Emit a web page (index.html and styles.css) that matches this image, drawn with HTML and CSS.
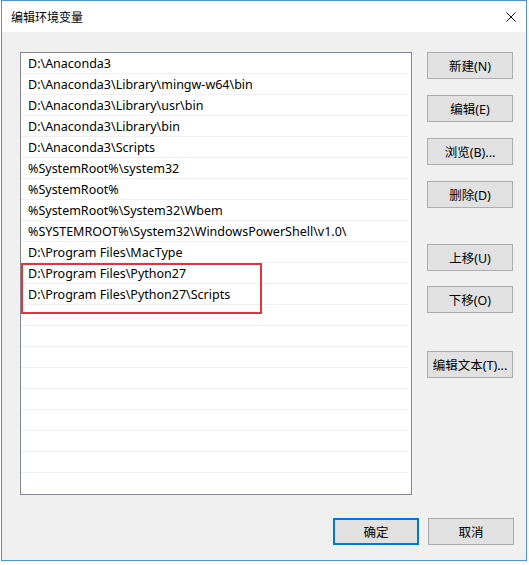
FILE: index.html
```html
<!DOCTYPE html>
<html lang="zh-CN">
<head>
<meta charset="utf-8">
<title>编辑环境变量</title>
<link rel="stylesheet" href="styles.css">
</head>
<body>
<div class="window">
  <div class="titlebar">
    <span class="title">编辑环境变量</span>
    <svg class="close" width="10" height="10" viewBox="0 0 10 10"><path d="M0.5 0.5 L9.5 9.5 M9.5 0.5 L0.5 9.5" stroke="#111" stroke-width="1" fill="none"/></svg>
  </div>
  <div class="content">
    <div class="main">
      <div class="list">
        <div class="row">D:\Anaconda3</div>
        <div class="row">D:\Anaconda3\Library\mingw-w64\bin</div>
        <div class="row">D:\Anaconda3\Library\usr\bin</div>
        <div class="row">D:\Anaconda3\Library\bin</div>
        <div class="row">D:\Anaconda3\Scripts</div>
        <div class="row">%SystemRoot%\system32</div>
        <div class="row">%SystemRoot%</div>
        <div class="row">%SystemRoot%\System32\Wbem</div>
        <div class="row">%SYSTEMROOT%\System32\WindowsPowerShell\v1.0\</div>
        <div class="row">D:\Program Files\MacType</div>
        <div class="row">D:\Program Files\Python27</div>
        <div class="row">D:\Program Files\Python27\Scripts</div>
        <div class="row"></div>
        <div class="row"></div>
        <div class="row"></div>
        <div class="row"></div>
        <div class="row"></div>
        <div class="row"></div>
        <div class="row"></div>
        <div class="row"></div>
        <div class="row last"></div>
        <div class="highlight"></div>
      </div>
      <div class="side">
        <button class="btn">新建(N)</button>
        <button class="btn">编辑(E)</button>
        <button class="btn">浏览(B)...</button>
        <button class="btn">删除(D)</button>
        <button class="btn up">上移(U)</button>
        <button class="btn">下移(O)</button>
        <button class="btn text">编辑文本(T)...</button>
      </div>
    </div>
    <div class="footer">
      <button class="btn default">确定</button>
      <button class="btn">取消</button>
    </div>
  </div>
</div>
</body>
</html>
```

FILE: styles.css
```css
* { box-sizing: border-box; }
html, body {
  margin: 0;
  padding: 0;
  background: #ffffff;
}
body {
  width: 529px;
  height: 565px;
  font-family: "Noto Sans", "Noto Sans CJK SC", sans-serif;
  font-size: 12px;
  color: #000;
}
.window {
  margin-left: 1px;
  width: 526px;
  height: 561px;
  border: 1px solid #4f95d8;
  background: #f0f0f0;
  display: flex;
  flex-direction: column;
}
.titlebar {
  height: 31px;
  background: #ffffff;
  display: flex;
  align-items: center;
  justify-content: space-between;
  padding: 0 10px 0 9px;
  flex: none;
}
.title {
  font-family: "Noto Sans CJK SC", sans-serif;
  font-size: 12px;
  color: #000;
}
.close { display: block; }
.content {
  padding: 20px 12px 0 18px;
  display: flex;
  flex-direction: column;
}
.main {
  display: flex;
  gap: 15px;
}
.list {
  position: relative;
  width: 392px;
  height: 443px;
  border: 1px solid #828790;
  background: #ffffff;
  flex: none;
  overflow: hidden;
}
.row {
  height: 21px;
  line-height: 22px;
  padding-left: 7px;
  margin-right: 3px;
  border-bottom: 1px solid #f0f0f0;
  white-space: nowrap;
  font-family: "Noto Sans", "Noto Sans CJK SC", sans-serif;
  font-size: 12.5px;
}
.row.last { border-bottom: none; }
.highlight {
  position: absolute;
  left: 0;
  top: 210px;
  width: 241px;
  height: 51px;
  border: 2px solid #e3333c;
}
.side {
  display: flex;
  flex-direction: column;
  width: 86px;
}
.btn {
  width: 86px;
  height: 27px;
  margin: 0;
  padding: 0;
  border: 1px solid #adadad;
  background: #e1e1e1;
  font-family: "Noto Sans", "Noto Sans CJK SC", sans-serif;
  font-size: 12.5px;
  color: #000;
  display: flex;
  align-items: center;
  justify-content: center;
  white-space: nowrap;
}
.side .btn + .btn { margin-top: 16px; }
.side .btn.up { margin-top: 36px; }
.side .btn + .btn.up + .btn { margin-top: 15px; }
.side .btn.text { margin-top: 38px; }
.footer {
  display: flex;
  justify-content: flex-end;
  gap: 9px;
  margin-top: 23px;
}
.btn.default {
  border: 2px solid #0078d7;
}
```
